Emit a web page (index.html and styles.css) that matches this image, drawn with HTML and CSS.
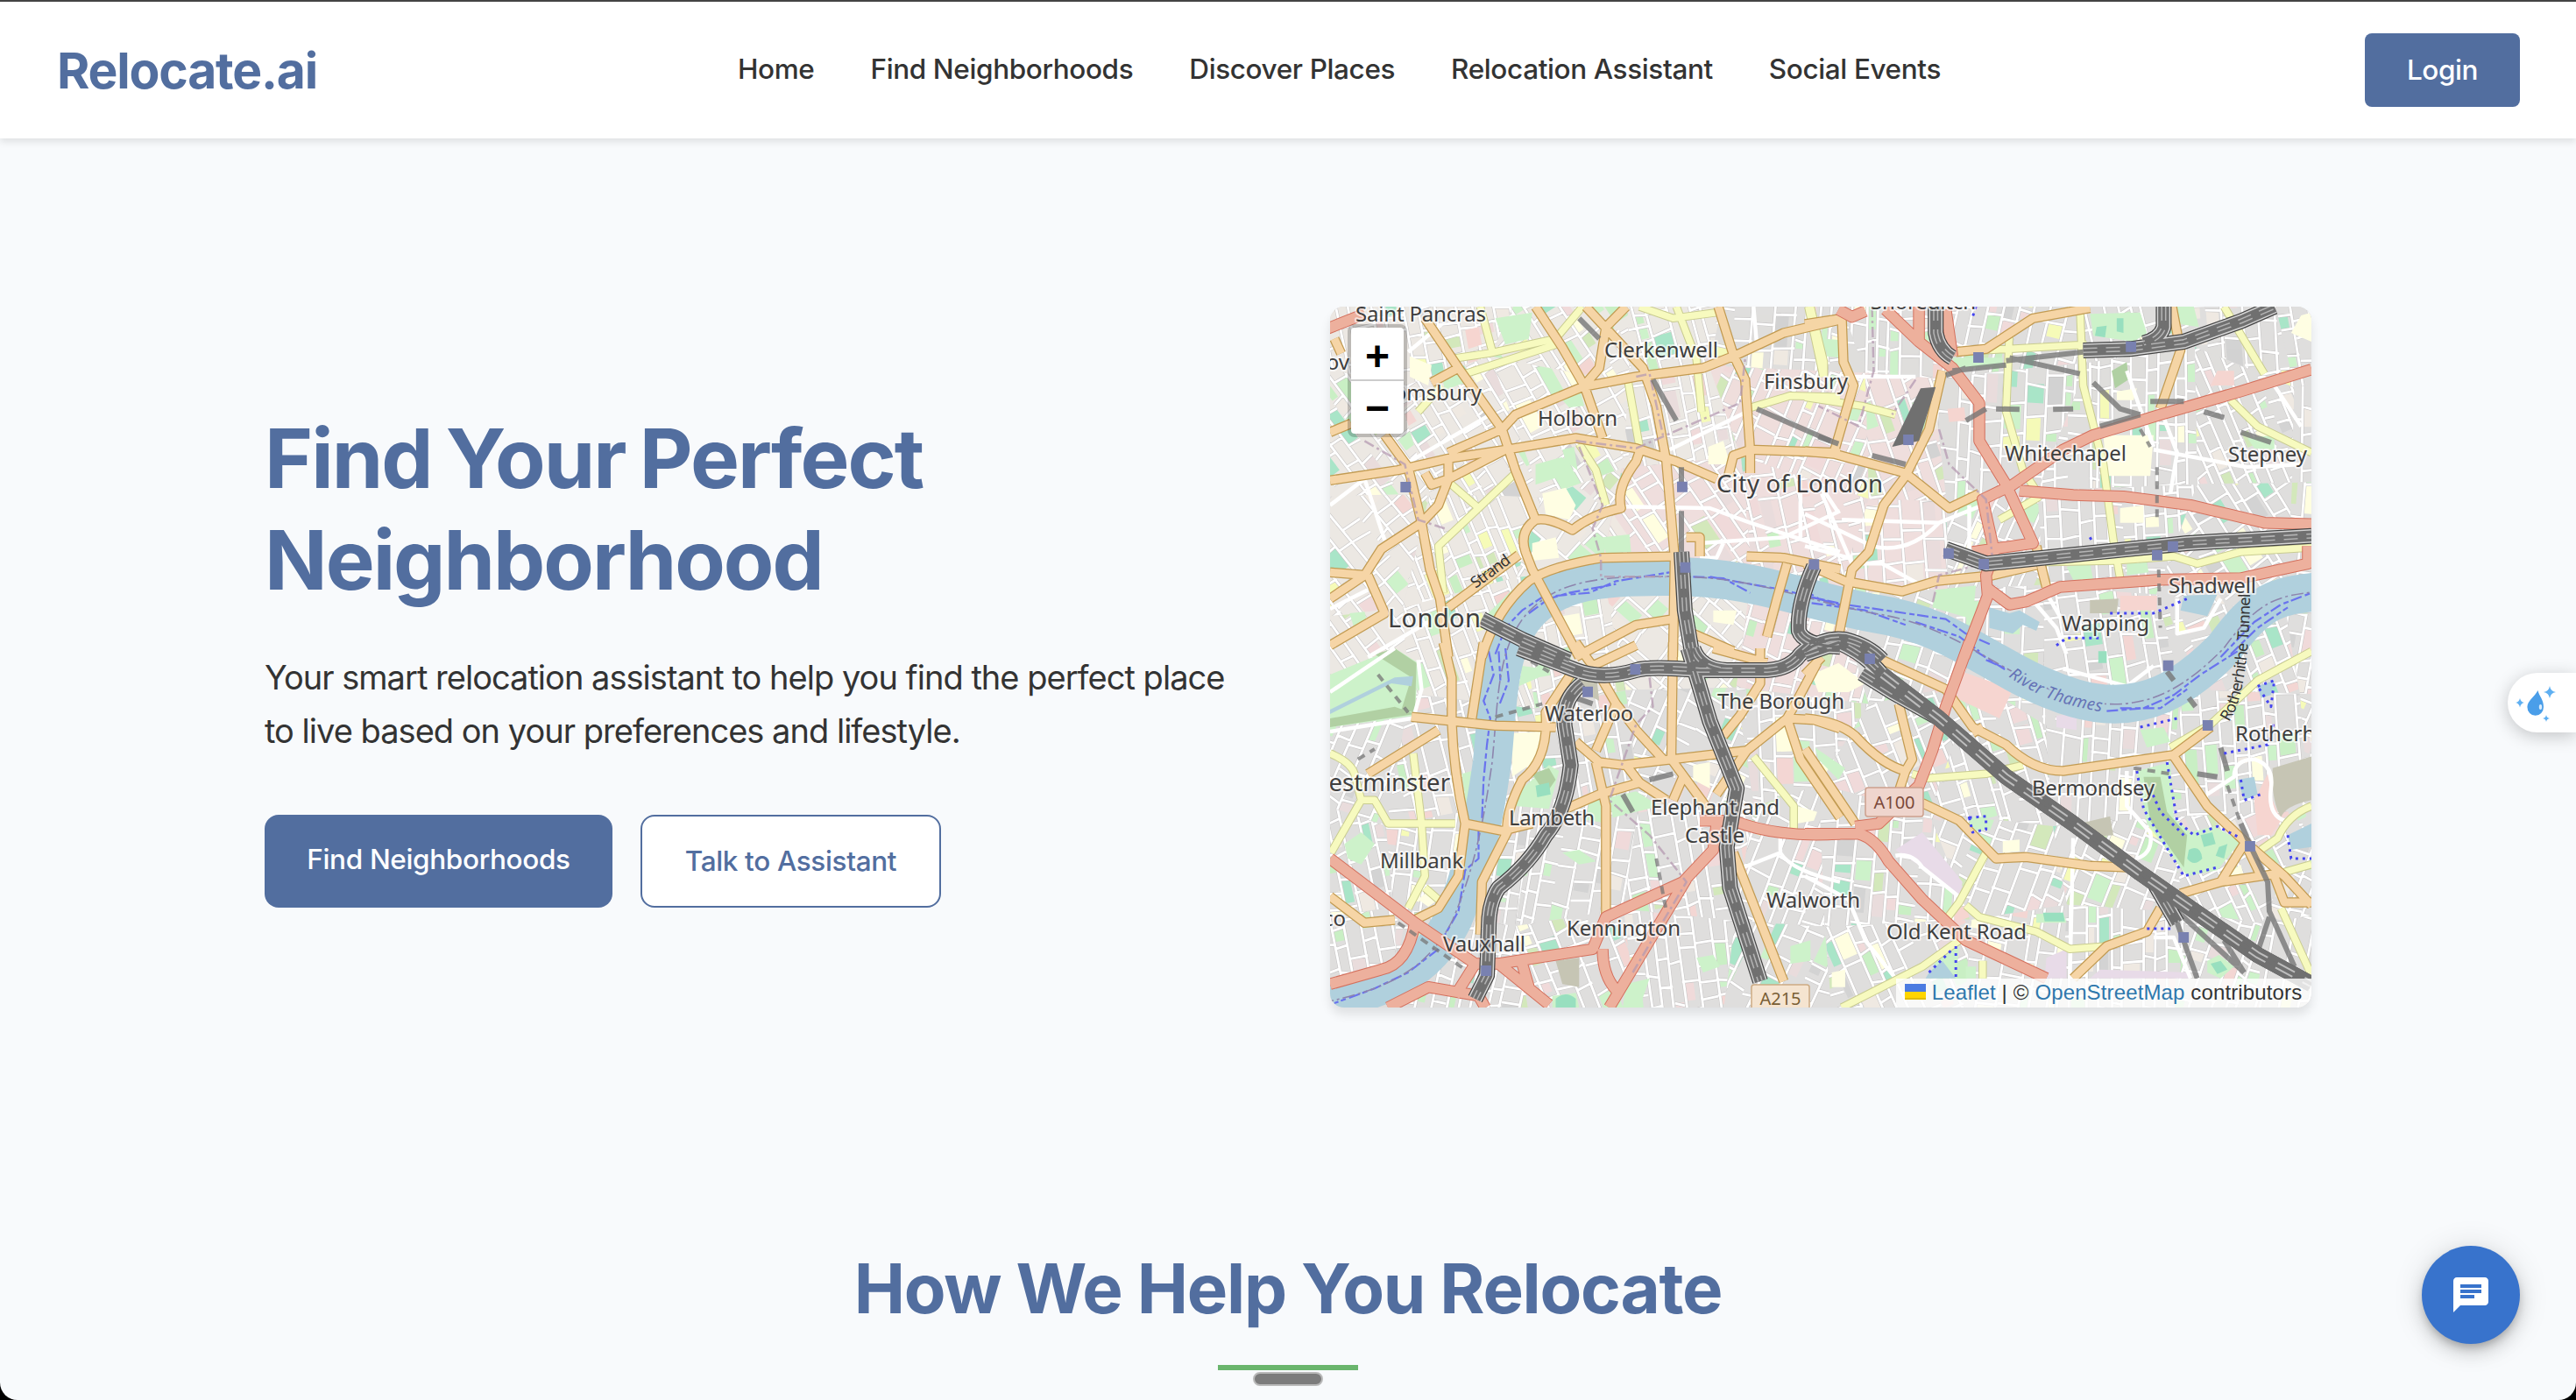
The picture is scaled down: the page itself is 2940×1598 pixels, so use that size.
FILE: index.html
```html
<!DOCTYPE html>
<html lang="en">
<head>
<meta charset="utf-8">
<title>Relocate.ai</title>
<link rel="stylesheet" href="styles.css">
</head>
<body>
<div class="page">
  <header class="header">
    <a class="logo">Relocate.ai</a>
    <nav class="nav">
      <a>Home</a>
      <a>Find Neighborhoods</a>
      <a>Discover Places</a>
      <a>Relocation Assistant</a>
      <a>Social Events</a>
    </nav>
    <button class="login">Login</button>
  </header>

  <main>
    <section class="hero">
      <div class="hero-text">
        <h1>Find Your Perfect<br>Neighborhood</h1>
        <p>Your smart relocation assistant to help you find the perfect place<br>to live based on your preferences and lifestyle.</p>
        <div class="actions">
          <a class="btn btn-primary">Find Neighborhoods</a>
          <a class="btn btn-outline">Talk to Assistant</a>
        </div>
      </div>

      <div class="map">
        <svg class="tiles" width="1120" height="800" viewBox="0 0 1120 800">
          <defs>
            <path id="thames" d="M-10 795C60 780 110 760 140 700C165 640 175 590 185 520C192 450 190 390 225 350C260 312 310 308 380 308C480 306 540 335 620 350C720 365 760 420 850 447C930 470 980 430 1020 390C1060 335 1080 330 1130 325"/>
            <g id="yellow-roads">
              <path class="nw" d="M400 240L520 220 720 170 800 60M495 60L530 210M450 290L720 190M380 330L310 420M400 660L490 750 600 630M490 750L370 880 385 1040M790 530L840 620 870 740M935 310L970 540M1080 60L1140 240 1155 420M970 60L1070 100 1200 80M1480 60L1520 250 1520 300M1290 410L1420 365 1568 370"/>
              <path class="ne" d="M10 60L55 300M610 150L600 420 650 620 690 690M820 60L830 330 890 600 920 860 940 990M450 215L840 190M1250 60L1370 290M1270 380L1350 470 1511 560M0 370L170 400 270 430M700 710L580 790M700 935L920 930 1100 915 1170 940 1300 900 1511 885"/>
              <path class="sw" d="M47 360Q110 390 120 430L140 520 50 700M140 520L180 520 220 600 420 600M295 360L320 600 330 780 280 890M330 820L380 870M1310 370L1430 540 1430 620"/>
              <path class="se" d="M320 430L370 445 540 430 650 400M1090 340L1210 260 1350 110 1511 10M540 700L460 870 420 930M480 880L520 920 690 970 790 1030 900 1020M460 1000L350 1090 110 1230M530 1070V1130M1511 540Q1440 570 1410 650L1360 690M1420 770L1511 740M1420 890L1511 1120"/>
            </g>
            <g id="orange-roads">
              <path class="nw" d="M47 655L250 620 400 580 570 550 780 510 960 545 1080 590 1200 650M330 100L430 270 560 480 600 620 660 790M660 60L740 200 805 330 860 510M560 480L600 430 800 335 960 300 1160 270 1260 225 1400 150 1568 105M930 60L870 130 850 270 805 330M810 60L980 270 1020 400 1050 590 1075 920 1070 1260M1205 60L1250 225 1285 310 1300 550 1300 630M1235 640L1250 570 1300 550 1568 560M210 500L280 610 320 800 345 960 375 1060 400 1260M400 650L370 740 320 800 200 890 150 980 47 1060M47 970L160 980M660 790Q700 780 770 825Q830 770 915 750Q900 680 960 590L975 540M660 790Q610 830 630 900L650 960 790 1260M400 1090L610 910M1085 915L860 920Q700 950 640 1000Q540 1100 500 1260M1290 915L1400 920 1568 960M1410 940L1380 1060 1350 1190M780 1260L960 1150 1070 1130M1130 1180L1250 1240M160 980L210 1110 47 1220M330 630L350 670 400 650 570 550M560 480L400 560M350 320L430 270M47 490L110 460M60 170L80 220M400 570L400 650M1110 850H1150V915"/>
              <path class="ne" d="M0 120L110 100 115 250 145 330 85 565M0 555L90 565 300 630 430 750 520 700M410 280L370 480 300 640 235 740 190 900 140 960 100 1190M450 215L540 205 680 100 850 65M1095 60L1120 210 1060 410M0 940L120 1000 290 1035 390 1000 560 980 690 945M690 880L720 1020"/>
              <path class="sw" d="M385 -20L410 100 410 250Q415 420 450 600L430 780 370 890 300 930M505 -20L470 240M290 235L540 265 720 270M770 80L690 220Q700 380 620 450Q570 560 575 630L500 800 495 980M860 110L900 190 840 350M900 190L960 280 1040 380M780 320L850 390 920 400 1290 350 1410 240M840 390L870 540 870 920M750 550L850 500 970 460 930 400M970 460L1050 520M1070 -20L1065 380 1180 560M1070 520L1100 440M1330 0V120L1270 230 1220 300M1500 50L1430 200 1410 240 1450 380 1568 580M1410 240L1490 245 1568 275M1290 350L1200 500M1250 700L1400 1140M450 600L560 625 650 600M370 280L160 430M47 850L150 940 240 930M1190 0L1350 50M780 -20L830 60 960 -10"/>
              <path class="se" d="M0 345L150 600M0 240Q100 250 150 300Q230 400 300 420L320 380 280 190M230 40L420 140 500 270 600 330Q680 420 770 420L1100 365 1210 270M500 290L530 270M1100 370L1200 540 1310 660 1430 780 1511 880M1310 670L1240 800 1120 840M1240 800L1420 770M300 420L280 490M350 530L460 590 570 720 660 715 850 745 960 750M1060 890L1020 970 900 1020 800 1130M1400 780L1430 870H1511M0 90L50 30M1310 660L1360 780"/>
            </g>
            <g id="red-roads">
              <path class="nw" d="M40 135L150 85"/>
              <path class="ne" d="M100 70L140 95 180 75M240 70L340 180 440 270 520 390 520 520 600 670 680 870 500 900M340 60V190M420 70L440 230M1511 275L1300 350 1060 430 860 500 770 550 620 670 530 720 565 900 540 980 545 1050 475 1260M640 690L800 705 950 710 1150 740 1370 800 1511 805M540 1020L610 1080 660 1070 760 1020 940 1005 1060 995 1300 990 1400 965 1500 940V880"/>
              <path class="sw" d="M47 720L300 940 480 1080 420 1190M300 940Q280 1080 200 1100L47 1150M470 1080H550L830 1030 870 920 1100 800 1190 690 1200 600M1150 590L1250 590Q1380 650 1568 635M860 1030Q860 1120 900 1170M1110 790L1000 1000 880 1230M550 1080L700 1220M220 1230L340 1160 490 1190 510 1230M620 1080L640 1160"/>
              <path class="se" d="M490 -20L420 200 380 350 340 470 220 600 150 610M0 635H160Q210 650 250 730L350 860 480 1000 720 1130"/>
            </g>
            <g id="railways">
              <path class="nw" d="M500 1130L620 1200 760 1270M1095 900L1105 1100 1130 1270M1490 950Q1440 1080 1445 1170Q1460 1220 1568 1225"/>
              <path class="ne" d="M390 60V150Q400 210 440 235M830 210L970 205 1130 180 1300 110 1400 60M1070 60V130Q1060 170 1010 185M420 890L540 940 840 905 1140 870 1511 845M0 1240Q60 1190 120 1200Q190 1220 230 1270"/>
              <path class="sw" d="M610 0L780 75Q860 110 960 75Q1000 60 1150 75H1350Q1420 70 1450 20L1480 -10M1115 0L1180 250 1260 480 1230 680 1240 820 1330 1140M800 120Q730 180 750 290L765 400Q750 560 690 640Q640 740 550 820Q520 870 520 960L515 1120 480 1200M1130 0Q1150 70 1230 75"/>
              <path class="se" d="M0 20L100 -20Q180 20 230 90L400 240 600 440 800 600 1000 770 1200 930 1350 1050 1511 1150M170 85L260 150 400 240M1040 800L1110 940"/>
            </g>
          </defs>

          <g id="districts"></g>

          <g class="park">
            <path class="nw" d="M660 600L740 575 750 635 660 670ZM740 550L775 540 785 620 750 590ZM380 300L420 280 450 320 390 345ZM740 380L795 355 805 400 760 405ZM105 1110L150 1105 160 1150 120 1165ZM510 1120L590 1030 570 1130 520 1180ZM540 100L650 80 640 170 570 190ZM860 850L940 840 945 900 870 905Z"/>
            <path class="ne" d="M850 85L1000 80 1020 150 980 180 860 160ZM60 170L110 175 110 235 65 230ZM1110 60H1160L1175 130 1120 120ZM440 235L590 235 590 265 450 270ZM960 940L1020 935 1025 970 960 980ZM390 1030L510 1015 500 1130 380 1090ZM1320 510L1400 500 1400 550 1340 545ZM780 950L850 940 860 995 800 995Z"/>
            <path class="sw" d="M47 90L240 0 310 50 300 230 47 270ZM600 500L700 400 730 420 700 550 600 540ZM90 670L140 630 180 670 140 740 100 720ZM880 510L960 490 1030 540 890 580ZM620 60L680 70 670 100 610 130ZM440 430L470 420 460 590ZM710 1190L780 1180 790 1230H710ZM740 700L790 690 840 730 790 740ZM1420 1020L1480 1000 1480 1070 1420 1080ZM930 1150L1000 1130 970 1230H920ZM1140 1060L1190 1050 1210 1090 1160 1110Z"/>
            <path class="se" d="M990 420L1090 390 1100 580 1150 630 1220 610 1300 660 1230 760 1140 780 1020 600ZM1000 280L1070 270 1090 320 1020 340ZM30 340L120 410 100 450 40 380ZM1200 1070L1235 1050 1280 1090 1240 1130 1200 1110ZM400 1040L460 1020 450 1130H370ZM480 1090H510V1130H480ZM690 910L770 905 780 940 690 940ZM490 580L540 575 540 620 500 630Z"/>
          </g>
          <g class="wood">
            <path class="sw" d="M180 20L240 0 305 50 300 220 260 210 290 100ZM47 240L240 200 300 225 47 270ZM650 430L700 410 720 450 690 500Z"/>
            <path class="se" d="M1010 440H1060L1080 560 1140 640 1130 750 1030 590Z"/>
            <path class="ne" d="M915 280L960 250 965 310 925 340Z"/>
          </g>
          <g class="pitch">
            <path class="ne" d="M870 130L900 125 895 165 865 160ZM930 100L950 100 950 150 930 145Z"/>
            <path class="sw" d="M660 470L700 460 705 500 665 510ZM720 1200Q750 1170 780 1200V1230H720Z"/>
            <path class="se" d="M1180 640L1215 630 1225 670 1190 680ZM1145 690Q1180 670 1185 720Q1160 750 1140 720ZM1235 680L1260 670 1250 720 1225 710ZM875 10H900V50H875ZM710 905L770 905 775 935 715 935ZM1210 1080L1240 1070 1260 1100 1230 1115Z"/>
          </g>
          <g class="retail">
            <path class="nw" d="M450 140L490 130 500 190 460 205Z"/>
            <path class="ne" d="M425 410L475 405 480 450 430 455ZM1230 280L1280 280 1280 330 1210 330ZM940 1050H1050V1100L940 1100Z"/>
            <path class="se" d="M1340 520L1380 430 1395 520 1420 590 1390 640 1350 640ZM470 80L620 140 580 240 450 170ZM440 900L480 880 490 920 450 940Z"/>
          </g>
          <g class="school">
            <path class="nw" d="M680 700L750 680 780 740 760 790 690 770ZM285 230L350 260 340 330 285 300ZM1175 540L1220 520 1240 600 1175 600ZM650 870L720 850 730 920 650 930ZM740 1120L790 1110 800 1180 750 1190ZM1190 1100L1260 1100 1250 1150 1190 1140Z"/>
            <path class="ne" d="M1480 90L1511 80V180L1450 150ZM930 350L990 340 980 380 930 380ZM890 500L1040 500 1030 640 900 640ZM940 750L1010 740 1010 800 940 800Z"/>
            <path class="sw" d="M590 290L680 285 680 370 590 440ZM1130 400L1180 390 1180 480 1130 450ZM310 860L330 840 370 860 340 885ZM1440 540L1500 560 1490 590 1440 600Z"/>
            <path class="se" d="M20 90L100 50 180 120 130 150 40 150ZM590 660L640 655 640 695 590 700ZM80 1110L120 1100 120 1160 80 1160ZM1250 780L1300 740 1310 785Z"/>
          </g>
          <g class="brown">
            <path class="ne" d="M850 1065L935 1060 930 1110H850ZM1320 1060L1350 1050 1340 1090Z"/>
            <path class="sw" d="M720 1070L790 1060 790 1160 740 1150ZM790 80L840 80 850 180 800 150Z"/>
            <path class="se" d="M1395 410L1511 370V520Q1430 540 1420 580Q1390 520 1395 410ZM820 600L910 575 920 640 860 645Z"/>
          </g>
          <g class="industry"><path class="se" d="M270 690L350 630 470 800 460 850 350 750ZM750 230L810 225 810 280 750 270ZM880 1100L1150 1110V1130H850ZM720 1060L780 1030 780 1130H715Z"/></g>

          <g class="minor">
            <path class="nw" d="M920 745L1180 750 1300 800 1568 900M1150 870L1400 850 1568 760M1060 550L1290 420M280 215L380 120M47 740L150 650 210 860M47 1095L160 1030M1310 60L1320 190M1450 700V850M1520 690L1560 760M1150 920H1200L1220 870M270 600L540 420M160 1260L340 1140"/>
            <path class="ne" d="M0 770L200 880Q310 910 400 800L530 740M50 700L140 940M0 880L130 920M110 790L400 800M170 940L230 940 340 1010M120 300H330M1040 550L1180 580 1320 610 1480 600M1060 410L1110 560 1090 700M1400 330L1480 470M960 280L1040 540M690 1080L750 1160 780 1250M720 1040L760 1120M1110 1060V1180L1190 1160 1240 1060M490 740V900"/>
            <path class="sw" d="M1568 800Q1420 760 1390 700L1280 750M47 285L290 240M47 150L240 0M310 40L320 140 295 240M1390 700V640"/>
            <path class="se" d="M270 710Q320 700 350 750L470 860M1200 500L1280 440Q1280 380 1340 380Q1400 400 1390 480Q1380 570 1430 590M960 420V540L1030 630Q1040 700 990 720M0 780L130 860 180 1000 270 1130M800 650L790 1130M1040 990H1100L1150 1130M770 70L960 130 1040 60"/>
          </g>

          <use href="#thames" class="river"/>
          <g class="water">
            <path class="ne" d="M550 1090L610 1110 640 1100 700 1140 690 1170 650 1150 620 1180 550 1160ZM1130 1050L1230 1045 1200 1120 1120 1100Z"/>
            <path class="sw" d="M47 210L240 100 295 95 290 130 230 120 47 225Z"/>
            <path class="se" d="M1290 450L1340 440 1350 500 1310 520ZM1440 640L1511 600V680L1450 690ZM370 1110L410 1070 450 1130H360ZM1350 130L1400 110 1390 160 1360 170Z"/>
          </g>
          <g class="ferry">
            <path class="nw" d="M540 1250L570 1160 620 1100 700 1040M640 1110L700 1060 760 1040 900 1010M720 1050L820 1040 900 1000 1060 970M1130 985L1220 990 1300 1040M1180 985L1300 1010 1400 1030 1568 1080M1460 1030L1520 1070 1568 1085"/>
            <path class="ne" d="M0 1050L120 1080 300 1110 420 1130 480 1180 560 1220M20 1075L180 1100 300 1150M330 1140L460 1190 520 1240M1240 1260L1340 1140 1420 1080 1511 1040M1270 1250L1350 1160 1440 1090"/>
            <path class="sw" d="M520 10L535 90 505 180 525 240 515 330 505 450 500 590M570 0L580 110 550 200M490 620L490 720 450 760 430 900 390 980M370 1030L280 1110 180 1165 60 1215M550 10L555 110"/>
            <path class="se" d="M510 10L600 75M900 215L1010 205 1100 160 1180 90 1290 10M940 205L1060 205 1140 140M540 40L600 70"/>
          </g>
          <use href="#thames" class="border-line"/>

          <use href="#yellow-roads" class="yellow-case"/>
          <use href="#yellow-roads" class="yellow-fill"/>
          <use href="#orange-roads" class="orange-case"/>
          <use href="#orange-roads" class="orange-fill"/>
          <use href="#red-roads" class="red-case"/>
          <use href="#red-roads" class="red-fill"/>

          <g class="boundary">
            <path class="nw" d="M780 520L960 545 1270 390 1285 240M790 540L860 740 830 820 855 920V985L1050 985M150 520L270 600 310 790 390 820M960 300L1000 290 1040 500"/>
            <path class="ne" d="M200 60L205 280 160 470 40 400M330 310L260 430M400 480L430 600 540 720 560 930 400 980 380 1080"/>
            <path class="sw" d="M1000 100L1010 200 960 260 920 390 880 520 1000 640 1110 800 950 1110"/>
          </g>
          <g class="yards">
            <path class="nw" d="M790 100L850 170M1010 310L1080 450M1320 410L1540 520M1095 610V660M1095 760V900"/>
            <path class="ne" d="M440 280L600 260M600 245L830 215M40 505L100 530M200 570L300 600M480 450L540 410M570 410L640 412M740 412L800 410M860 320L940 410 1000 430M880 470L1000 430M1030 385H1130M1190 420L1250 440M1300 490L1390 525M420 295L480 270M610 235L820 290"/>
            <path class="sw" d="M920 500L950 560M1000 450L1070 430M780 170L830 190"/>
            <path class="se" d="M1080 80L1100 110M1145 170L1165 200M1240 340L1260 420M1170 430L1230 440M1300 600L1330 680 1380 800 1385 900 1460 1090M1110 940L1170 1130M1100 890L1310 1110M1385 920L1350 1040M1250 1000L1310 1110"/>
          </g>
          <g class="tunnels">
            <path class="ne" d="M1050 610V800M1055 960L1060 1160M1000 480L1030 540"/>
            <path class="sw" d="M190 90L280 220M540 235L680 190M1020 720L1050 900M130 380L180 345M610 20L700 80M250 940L450 1100"/>
            <path class="se" d="M1260 470L1300 600M980 410L1090 430"/>
          </g>
          <path class="ne station-yard" d="M345 340L390 335 340 520 260 540Z"/>

          <use href="#railways" class="rail-edge"/>
          <use href="#railways" class="rail-gap"/>
          <use href="#railways" class="rail-core"/>
          <use href="#railways" class="rail-track"/>
          <use href="#railways" class="rail-dash"/>
          <path class="se rail-wide" d="M230 90L400 240 600 440 800 600 1000 770 1200 930 1350 1050 1511 1150"/>
          <path class="se rail-wide-dash" d="M230 90L400 240 600 440 800 600 1000 770 1200 930 1350 1050 1511 1150"/>
          <path class="se rail-wide-mid" d="M230 90L400 240 600 440 800 600 1000 770 1200 930 1350 1050 1511 1150"/>

          <g class="dots">
            <path class="se" d="M990 420L1010 550 1130 780 1230 750M1080 390L1110 590 1160 640 1230 610 1300 650M1350 130L1400 110 1390 200 1350 130M1440 640L1450 720H1511M1300 450L1310 520 1360 500M490 580L540 575 540 620 500 630ZM1020 960H1090M450 1020V1130M370 1110L440 1030M1000 270L1110 240M1250 360L1380 330 1400 250M1030 480L1060 560 1130 640"/>
            <path class="ne" d="M910 1110L1040 1110 1140 1060M750 1220L780 1195H880M510 60L500 95M850 850L860 870"/>
          </g>

          <g class="stations">
            <path class="nw" d="M257 660h31v36h-31zM1082 659h31v36h-31zM1091 935h31v36h-31zM1475 925h31v36h-31z"/>
            <path class="ne" d="M502 216h31v36h-31zM957 179h31v36h-31zM293 498h31v36h-31zM413 887h31v36h-31zM518 924h31v36h-31zM1082 863h31v36h-31zM1035 893h31v36h-31z"/>
            <path class="sw" d="M800 131h31v36h-31zM942 54h31v36h-31zM497 1086h31v36h-31z"/>
            <path class="se" d="M178 18h31v36h-31zM1068 41h31v36h-31zM1186 246h31v36h-31zM1312 660h31v36h-31zM1114 972h31v36h-31z"/>
          </g>

          <g class="labels">
            <text x="29" y="17" textLength="149">Saint Pancras</text>
            <text x="22" y="72" text-anchor="end">ov</text>
            <text x="173" y="107" text-anchor="end">omsbury</text>
            <text x="313" y="58" textLength="130">Clerkenwell</text>
            <text x="495" y="94" textLength="96">Finsbury</text>
            <text x="237" y="136" textLength="91">Holborn</text>
            <text x="617" y="3" textLength="120">Shoreditch</text>
            <text x="770" y="176" textLength="139">Whitechapel</text>
            <text x="1025" y="177" textLength="90">Stepney</text>
            <text x="957" y="327" textLength="100">Shadwell</text>
            <text x="835" y="370" textLength="100">Wapping</text>
            <text x="245" y="473" textLength="101">Waterloo</text>
            <text x="442" y="459" textLength="145">The Borough</text>
            <text x="204" y="592" textLength="98">Lambeth</text>
            <text x="366" y="580" textLength="147">Elephant and</text>
            <text x="405" y="612" textLength="68">Castle</text>
            <text x="57" y="641" textLength="95">Millbank</text>
            <text x="18" y="707" text-anchor="end">co</text>
            <text x="129" y="736" textLength="94">Vauxhall</text>
            <text x="270" y="718" textLength="130">Kennington</text>
            <text x="498" y="686" textLength="107">Walworth</text>
            <text x="635" y="722" textLength="160">Old Kent Road</text>
            <text x="801" y="558" textLength="140">Bermondsey</text>
            <text x="1033" y="496">Rotherh</text>
            <text class="big" x="441" y="212" textLength="190">City of London</text>
            <text class="big capital" x="66" y="366" textLength="106">London</text>
            <text class="big" x="137" y="553" text-anchor="end">estminster</text>
            <text class="street" transform="translate(166 322) rotate(-36)" textLength="51">Strand</text>
            <path id="tunnel-line" class="guide" d="M1026 474Q1049 440 1050 325"/>
            <text class="street"><textPath href="#tunnel-line" textLength="150">Rotherhithe Tunnel</textPath></text>
            <path id="river-line" class="guide" d="M774 422Q820 456 900 465"/>
            <text class="river-name"><textPath href="#river-line" textLength="115">River Thames</textPath></text>
          </g>
          <g class="shields">
            <rect x="611" y="549" width="66" height="33" rx="3"/>
            <text x="644" y="573">A100</text>
            <rect class="tan" x="481" y="774" width="66" height="33" rx="3"/>
            <text class="tan" x="514" y="797">A215</text>
          </g>
        </svg>
        <div class="zoom"><a>+</a><a>−</a></div>
        <div class="attribution">
          <svg class="flag" width="24" height="18" viewBox="0 0 12 9"><path fill="#4C7BE1" d="M0 0h12v4.500H0z"/><path fill="#FFD500" d="M0 4.500h12v3.500H0z"/><path fill="#E0BC00" d="M0 8h12v1H0z"/></svg>
          <a>Leaflet</a> <span>|</span> © <a>OpenStreetMap</a> contributors
        </div>
      </div>
    </section>

    <section class="help">
      <h2>How We Help You Relocate</h2>
      <div class="underline"></div>
      <div class="handle"></div>
    </section>
  </main>

  <div class="side-tab">
    <svg width="78" height="68" viewBox="0 0 78 68">
      <path fill="#4a9ee9" d="M34.500 20C36 27 41 30 41 39a9.300 9.800 0 0 1-18.600 0C22.400 32 31 27 34.500 20Z"/>
      <ellipse cx="37.500" cy="39" rx="1.700" ry="3" fill="#d9ecfd"/>
      <path fill="#5fb0f2" d="M48 15Q49 21 55 22Q49 23 48 29Q47 23 41 22Q47 21 48 15ZM14 29Q15 33.500 19 34Q15 34.500 14 39.500Q13 34.500 9 34Q13 33.500 14 29ZM44 48Q44.500 51.500 48 52Q44.500 52.500 44 56Q43.500 52.500 40 52Q43.500 51.500 44 48Z"/>
    </svg>
  </div>
  <button class="chat" aria-label="Open chat">
    <svg width="48" height="48" viewBox="0 0 24 24"><path fill="#fff" d="M20 2H4c-1.100 0-1.990.9-1.990 2L2 22l4-4h14c1.100 0 2-.9 2-2V4c0-1.100-.9-2-2-2zM6 6h12v2H6zm0 3h12v2H6zm8 5H6v-2h8v2z"/></svg>
  </button>
</div>
<script src="map.js"></script>
</body>
</html>
```

FILE: styles.css
```css
* { box-sizing: border-box; }
html { background: #000; }
body {
  margin: 0;
  width: 2940px;
  height: 1598px;
  overflow: hidden;
  background: #000;
  font-family: Inter, "Liberation Sans", sans-serif;
  color: #333;
}
.page {
  position: relative;
  height: 1598px;
  overflow: hidden;
  background: #f8fafc;
  border-radius: 0 0 20px 20px;
}

.header {
  position: relative;
  display: grid;
  grid-template-columns: 776px 1fr auto;
  align-items: center;
  height: 158px;
  padding: 0 64px 0 65px;
  background: #fff;
  border-top: 2px solid #444;
  box-shadow: 0 4px 8px rgba(0, 0, 0, .1);
}
.logo {
  font-size: 57px;
  font-weight: 700;
  letter-spacing: -1.200px;
  color: #526e9f;
  padding-top: 1px;
}
.nav {
  display: flex;
  gap: 64px;
  padding: 0 0 3px 1px;
  font-size: 31.500px;
  font-weight: 500;
  letter-spacing: -.38px;
  white-space: nowrap;
}
.login {
  width: 177px;
  height: 84px;
  padding-bottom: 3px;
  border: 0;
  border-radius: 8px;
  background: #526e9f;
  color: #fff;
  font: 500 31.500px Inter, sans-serif;
  letter-spacing: -.4px;
}

.hero {
  display: grid;
  grid-template-columns: 1120px 1120px;
  gap: 96px;
  align-items: center;
  padding: 192px 302px;
}
h1 {
  margin: 0 0 46px;
  padding-top: 2px;
  font-size: 94px;
  line-height: 115.200px;
  font-weight: 700;
  letter-spacing: -2px;
  word-spacing: -4px;
  color: #526e9f;
}
.hero p { margin: 0 0 64px; font-size: 38px; line-height: 61.400px; letter-spacing: -.98px; white-space: nowrap; }
.actions { display: flex; gap: 32px; height: 106px; }
.btn {
  display: flex;
  align-items: center;
  justify-content: center;
  border-radius: 16px;
  font-size: 31.500px;
  font-weight: 500;
  letter-spacing: -.35px;
  white-space: nowrap;
}
.btn-primary { width: 397px; padding-bottom: 5px; background: #526e9f; color: #fff; }
.btn-outline { width: 343px; padding-bottom: 1px; border: 2px solid #526e9f; background: #fff; color: #526e9f; }

.map {
  position: relative;
  width: 1120px;
  height: 800px;
  overflow: hidden;
  border-radius: 16px;
  box-shadow: 0 8px 12px rgba(0, 0, 0, .1);
  background: #e0dfdf;
}
.tiles { display: block; }
.tiles path, .tiles use { fill: none; vector-effect: non-scaling-stroke; stroke-linejoin: round; }
/* The network is drawn on four quarter sheets. */
.nw { transform: translate(-18px, -20px) scale(.38265, .33333); }
.ne { transform: translate(542px, -20px) scale(.38265, .33333); }
.sw { transform: translate(-18px, 390px) scale(.38265, .33333); }
.se { transform: translate(542px, 390px) scale(.38265, .33333); }

.tiles .park path { fill: #cdf2ca; }
.tiles .wood path { fill: #b1d0a3; }
.tiles .pitch path { fill: #98dfbf; }
.tiles .retail path { fill: #f6d5d0; }
.tiles .school path { fill: #fffee3; }
.tiles .brown path { fill: #c6c5b4; }
.tiles .industry path { fill: #e8dbe8; }
.tiles .water path { fill: #b0d0dd; }
.tiles .minor path { stroke: #fff; stroke-width: 4.500px; }
.tiles .street-case { stroke: #c8c6c6; stroke-width: 4px; }
.tiles .street-fill { stroke: #fff; stroke-width: 2.800px; }
.river { stroke: #b0d0dd; stroke-width: 44px; }
.tiles .ferry path { stroke: #6a73ee; stroke-width: 2.200px; stroke-dasharray: 13 4 6 3; }
.border-line { stroke: #8d84ad; stroke-width: 1.600px; stroke-dasharray: 14 4 3 4; }
.yellow-case { stroke: #c9cc90; stroke-width: 9.500px; }
.yellow-fill { stroke: #f7fabf; stroke-width: 7.500px; }
.orange-case { stroke: #c29b52; stroke-width: 11.500px; }
.orange-fill { stroke: #f6d5a6; stroke-width: 9px; }
.red-case { stroke: #d4705d; stroke-width: 13.500px; }
.red-fill { stroke: #edb09d; stroke-width: 11.500px; }
.tiles .boundary path { stroke: #b69bb2; stroke-width: 2.500px; stroke-dasharray: 12 4 3 4; opacity: .75; }
.tiles .yards path { stroke: #777; stroke-width: 6px; opacity: .8; }
.tiles .tunnels path { stroke: #777; stroke-width: 4px; stroke-dasharray: 9 7; opacity: .75; }
.tiles .station-yard { fill: #707070; }
.rail-edge { stroke: #444; stroke-width: 18px; }
.rail-gap { stroke: #d4d4d4; stroke-width: 15.500px; }
.rail-core { stroke: #707070; stroke-width: 12.500px; }
.rail-track { stroke: #b4b4b4; stroke-width: 6px; stroke-dasharray: 16 10; }
.rail-dash { stroke: #707070; stroke-width: 3px; }
.tiles .rail-wide { stroke: #707070; stroke-width: 18px; }
.tiles .rail-wide-dash { stroke: #bdbdbd; stroke-width: 8px; stroke-dasharray: 22 13; }
.tiles .rail-wide-mid { stroke: #707070; stroke-width: 4px; }
.tiles .dots path { stroke: #4444f0; stroke-width: 3px; stroke-dasharray: 3 5; }
.tiles .stations path { fill: #7981b0; }
.labels text {
  font: 24px "Noto Sans", sans-serif;
  fill: #3e3e3e;
  stroke: rgba(255, 255, 255, .65);
  stroke-width: 4px;
  stroke-linejoin: round;
  paint-order: stroke;
}
.labels .big { font-size: 27.500px; }
.labels .capital { font-size: 29px; }
.labels .street { font-size: 18px; fill: #333; stroke: none; }
.labels .river-name { font-size: 19px; font-style: italic; fill: #6573b6; stroke: #b0d0dd; stroke-width: 5px; }
.shields rect { fill: #efd5cd; stroke: #cda08d; stroke-width: 1.500px; }
.shields rect.tan { fill: #f5e4d0; stroke: #cdab83; }
.shields text { font: 20px "Noto Sans", sans-serif; text-anchor: middle; fill: #7a4839; }
.shields text.tan { fill: #785e34; }

.zoom {
  position: absolute;
  left: 20px;
  top: 20px;
  width: 68px;
  border: 4px solid rgba(0, 0, 0, .2);
  border-radius: 8px;
  background: #fff;
  background-clip: padding-box;
}
.zoom a {
  display: block;
  height: 60px;
  font: bold 48px/66px "Liberation Sans", sans-serif;
  text-align: center;
  color: #000;
}
.zoom a:first-child { height: 61px; border-bottom: 2px solid #ccc; }
.zoom a:last-child { line-height: 62px; }
.attribution {
  position: absolute;
  right: 0;
  bottom: 0;
  width: 474px;
  height: 33px;
  padding-left: 10px;
  background: rgba(255, 255, 255, .8);
  font: 24px/32px "Liberation Sans", sans-serif;
  letter-spacing: .13px;
  white-space: nowrap;
}
.attribution a { color: #2f78ad; }

.help { display: flex; flex-direction: column; align-items: center; padding-top: 81px; }
h2 {
  margin: 0 0 39px;
  font-size: 78px;
  line-height: 96px;
  font-weight: 700;
  letter-spacing: -1.250px;
  color: #526e9f;
  white-space: nowrap;
}
.underline { width: 160px; height: 6px; background: #6ab56d; }
.handle { width: 80px; height: 16px; margin-top: 2px; border: 2px solid #bababa; border-radius: 8px; background: #7c7c7c; }

.side-tab {
  position: absolute;
  right: 0;
  top: 768px;
  width: 78px;
  height: 68px;
  border-radius: 34px 0 0 34px;
  background: #fff;
  box-shadow: 0 4px 20px rgba(0, 0, 0, .22);
}
.side-tab svg { display: block; }
.chat {
  position: absolute;
  right: 64px;
  top: 1422px;
  display: flex;
  align-items: center;
  justify-content: center;
  width: 112px;
  height: 112px;
  padding: 0;
  border: 0;
  border-radius: 50%;
  background: #3873cc;
  box-shadow: 0 6px 10px -2px rgba(0, 0, 0, .2), 0 10px 20px rgba(0, 0, 0, .14), 0 2px 36px rgba(0, 0, 0, .12);
}
```

FILE: map.js
```js
// Fills the map background with districts of small streets and building plots.
(function () {
  var seed = 11;
  function rnd() { seed = (seed * 16807) % 2147483647; return seed / 2147483647; }
  var cell = 125, cols = 10, rows = 8, corner = [];
  for (var j = 0; j <= rows; j++) {
    corner[j] = [];
    for (var i = 0; i <= cols; i++) {
      corner[j][i] = [(i - .3) * cell + (rnd() - .5) * 60, (j - .4) * cell + (rnd() - .5) * 60];
    }
  }
  var plots = ['#cdf2ca', '#d3e8bb', '#fffee0', '#f6fbb8', '#a9e5c8', '#f3d6d3', '#efe9e2', '#e9dcdc', '#d3d3d3', '#cdf2ca', '#f0dada', '#c9efc4'];
  var out = '';
  for (j = 0; j < rows; j++) {
    for (i = 0; i < cols; i++) {
      var p = [corner[j][i], corner[j][i + 1], corner[j + 1][i + 1], corner[j + 1][i]];
      var cx = (p[0][0] + p[2][0]) / 2, cy = (p[0][1] + p[2][1]) / 2;
      var id = 'd' + j + '-' + i;
      var city = Math.hypot(cx - 560, cy - 220) < 160;
      var base = city ? '#efdedd' : (cx < 450 && cy < 480 ? '#ece8e3' : '#dfdedd');
      var poly = p.map(function (q) { return q[0].toFixed(0) + ',' + q[1].toFixed(0); }).join(' ');
      out += '<clipPath id="' + id + '"><polygon points="' + poly + '"/></clipPath>';
      out += '<polygon points="' + poly + '" fill="' + base + '" stroke="' + base + '"/>';
      var angle = (cx < 450 && cy < 450 ? -28 : cx > 780 && cy < 450 ? -8 : 0) + (rnd() - .5) * 50;
      var d = '', fills = '', x = -115;
      while (x < 115) {
        var w = 11 + rnd() * 14, y = -115 + rnd() * 10;
        if (rnd() < .88) d += 'M' + x.toFixed(0) + ' -115L' + (x + (rnd() - .5) * 8).toFixed(0) + ' 115';
        while (y < 115) {
          var h = 14 + rnd() * 32;
          if (rnd() < .4) {
            var c = plots[Math.floor(rnd() * plots.length)];
            fills += '<rect x="' + (x + 1).toFixed(0) + '" y="' + y.toFixed(0) + '" width="' + (w * (.5 + rnd() * .5)).toFixed(0) + '" height="' + (h * (.4 + rnd() * .6)).toFixed(0) + '" fill="' + c + '"/>';
          }
          d += 'M' + x.toFixed(0) + ' ' + y.toFixed(0) + 'L' + (x + w).toFixed(0) + ' ' + (y + (rnd() - .5) * 8).toFixed(0);
          y += h;
        }
        x += w;
      }
      out += '<g clip-path="url(#' + id + ')"><g transform="translate(' + cx.toFixed(0) + ' ' + cy.toFixed(0) + ') rotate(' + angle.toFixed(0) + ')">' +
        fills + '<path class="street-case" d="' + d + '"/><path class="street-fill" d="' + d + '"/></g></g>';
    }
  }
  document.getElementById('districts').innerHTML = out;
})();
```
